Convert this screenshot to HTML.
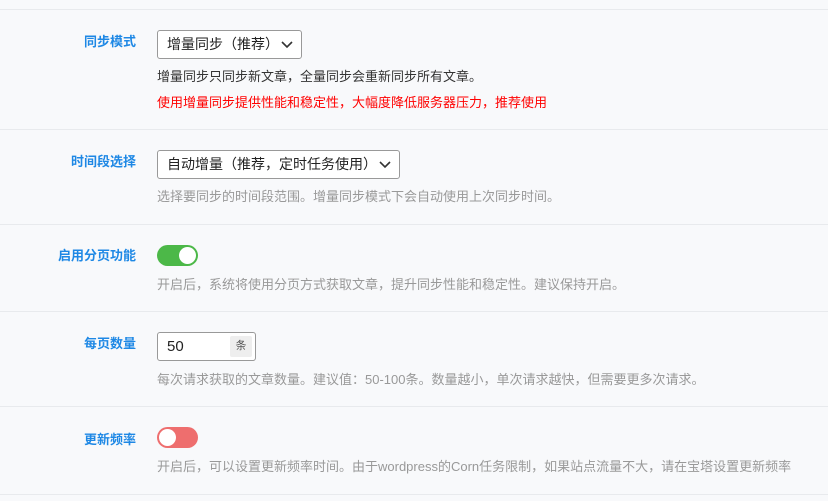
<!DOCTYPE html>
<html><head><meta charset="utf-8"><style>
*{margin:0;padding:0;box-sizing:border-box}
body{width:828px;height:501px;background:#f8f9fb;font-family:"Liberation Sans","Noto Sans CJK SC",sans-serif;font-size:13px;color:#333;position:relative;overflow:hidden}
.hr{position:absolute;left:0;right:0;height:1px;background:#e8eaed}
.lb{position:absolute;right:692px;color:#1e88e5;font-weight:bold;font-size:13px;white-space:nowrap}
.t{position:absolute;left:157px;white-space:nowrap;font-size:13px}
.d{color:#999}
.sel{position:absolute;left:157px;height:29px;border:1px solid #999;border-radius:3px;background:#fff;font-size:14px;color:#222;padding:0 0 0 9px;line-height:27px}
.sel svg{position:absolute;right:8px;top:10px}
.tg{position:absolute;left:157px;width:41px;height:21px;border-radius:11px}
.tg i{position:absolute;top:2px;width:17px;height:17px;border-radius:50%;background:#fff}
</style></head><body>
<div class="hr" style="top:9px"></div>
<div class="hr" style="top:129px"></div>
<div class="hr" style="top:224px"></div>
<div class="hr" style="top:311px"></div>
<div class="hr" style="top:406px"></div>
<div class="hr" style="top:494px"></div>

<div class="lb" style="top:31px">同步模式</div>
<div class="sel" style="top:30px;width:145px">增量同步（推荐）<svg width="12" height="8" viewBox="0 0 12 8"><path d="M1 1l5 5 5-5" fill="none" stroke="#333" stroke-width="1.6"/></svg></div>
<div class="t" style="top:66px;color:#333">增量同步只同步新文章，全量同步会重新同步所有文章。</div>
<div class="t" style="top:92px;color:#f00">使用增量同步提供性能和稳定性，大幅度降低服务器压力，推荐使用</div>

<div class="lb" style="top:151px">时间段选择</div>
<div class="sel" style="top:150px;width:243px">自动增量（推荐，定时任务使用）<svg width="12" height="8" viewBox="0 0 12 8"><path d="M1 1l5 5 5-5" fill="none" stroke="#333" stroke-width="1.6"/></svg></div>
<div class="t d" style="top:186px">选择要同步的时间段范围。增量同步模式下会自动使用上次同步时间。</div>

<div class="lb" style="top:245px">启用分页功能</div>
<div class="tg" style="top:245px;background:#4cb848"><i style="right:2px"></i></div>
<div class="t d" style="top:274px">开启后，系统将使用分页方式获取文章，提升同步性能和稳定性。建议保持开启。</div>

<div class="lb" style="top:333px">每页数量</div>
<div style="position:absolute;left:157px;top:332px;width:99px;height:29px;border:1px solid #999;border-radius:3px;background:#fff">
<span style="position:absolute;left:9px;top:5px;font-size:15px;color:#222">50</span>
<span style="position:absolute;left:72px;top:3px;width:22px;height:21px;background:#eee;border-radius:2px;font-size:11px;color:#555;text-align:center;line-height:21px">条</span></div>
<div class="t d" style="top:369px">每次请求获取的文章数量。建议值：50-100条。数量越小，单次请求越快，但需要更多次请求。</div>

<div class="lb" style="top:429px">更新频率</div>
<div class="tg" style="top:427px;background:#ee6e6e"><i style="left:2px"></i></div>
<div class="t d" style="top:456px">开启后，可以设置更新频率时间。由于wordpress的Corn任务限制，如果站点流量不大，请在宝塔设置更新频率</div>
</body></html>
